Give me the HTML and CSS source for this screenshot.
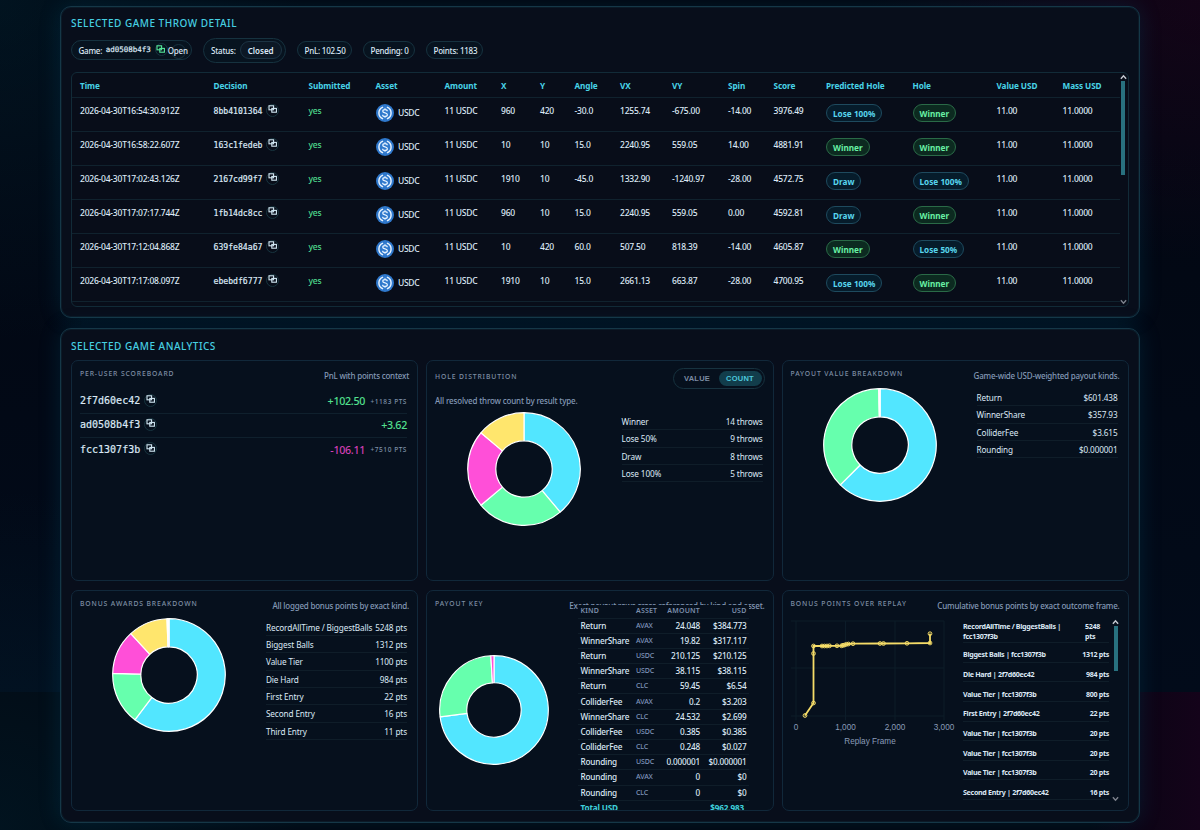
FILE: index.html
```
<!DOCTYPE html>
<html lang="en">
<head>
    <meta charset="UTF-8">
    <meta name="viewport" content="width=device-width, initial-scale=1.0">
    <title>Game Analytics</title>
    <link rel="stylesheet" href="styles.css">
</head>
<body>
    <!-- shared icons -->
    <svg class="defs" width="0" height="0">
        <symbol id="icon-copy" viewBox="0 0 12 12">
            <rect x="2" y="1.8" width="4.6" height="4" fill="none" stroke="currentColor" stroke-width="1.1"/>
            <rect x="4.8" y="4.4" width="4.6" height="3.8" fill="none" stroke="currentColor" stroke-width="1.1"/>
        </symbol>
        <symbol id="icon-usdc" viewBox="0 0 32 32">
            <circle cx="16" cy="16" r="16" fill="#2f78cc"/>
            <path d="M12.6 5.6a11 11 0 0 0 0 20.8M19.4 5.6a11 11 0 0 1 0 20.8" fill="none" stroke="#e6f2ff" stroke-width="2.6"/>
            <path d="M20 13c0-2-1.6-3-4-3s-4 1-4 2.9c0 4.2 8.2 1.9 8.2 6.1 0 2-1.7 3.1-4.2 3.1s-4.2-1.1-4.2-3.2M16 7.6v2.4M16 22v2.4" fill="none" stroke="#e6f2ff" stroke-width="2.2"/>
        </symbol>
        <symbol id="icon-up" viewBox="0 0 8 6"><path d="M1 5l3-3.4L7 5" fill="none" stroke="#c3c7cf" stroke-width="1.7"/></symbol>
        <symbol id="icon-down" viewBox="0 0 8 6"><path d="M1 1l3 3.4L7 1" fill="none" stroke="#7d828c" stroke-width="1.6"/></symbol>
    </svg>

    <main class="page">
        <section class="panel detail">
            <h2>Selected Game Throw Detail</h2>
            <div class="pills">
                <span class="pill game">Game: <code>ad0508b4f3</code><span class="copy green"><svg><use href="#icon-copy"/></svg></span><span class="open">Open</span></span>
                <span class="pill status">Status: <b class="closed">Closed</b></span>
                <span class="pill pnl">PnL: 102.50</span>
                <span class="pill pending">Pending: 0</span>
                <span class="pill points">Points: 1183</span>
            </div>
            <div class="table-box">
                <table class="throws">
                    <colgroup id="throw-cols"></colgroup>
                    <thead>
                        <tr>
                            <th>Time</th><th>Decision</th><th>Submitted</th><th>Asset</th><th>Amount</th><th>X</th><th>Y</th><th>Angle</th>
                            <th>VX</th><th>VY</th><th>Spin</th><th>Score</th><th>Predicted Hole</th><th>Hole</th><th>Value USD</th><th>Mass USD</th>
                        </tr>
                    </thead>
                    <tbody id="throw-rows"></tbody>
                </table>
                <div class="scrollbar">
                    <svg><use href="#icon-up"/></svg>
                    <div class="thumb"></div>
                    <svg class="down"><use href="#icon-down"/></svg>
                </div>
            </div>
        </section>

        <section class="panel analytics">
            <h2>Selected Game Analytics</h2>
            <div class="cards">
                <article class="card">
                    <header><h3>Per-User Scoreboard</h3><p>PnL with points context</p></header>
                    <div class="scores" id="scores"></div>
                </article>

                <article class="card hole">
                    <header>
                        <h3>Hole Distribution</h3>
                        <div class="toggle"><span>VALUE</span><span class="active">COUNT</span></div>
                    </header>
                    <p class="note">All resolved throw count by result type.</p>
                    <div class="split">
                        <svg class="donut" id="hole-donut" viewBox="-57 -57 114 114"></svg>
                        <ul class="legend" id="hole-legend"></ul>
                    </div>
                </article>

                <article class="card">
                    <header><h3>Payout Value Breakdown</h3><p>Game-wide USD-weighted payout kinds.</p></header>
                    <div class="split">
                        <svg class="donut" id="payout-donut" viewBox="-57 -57 114 114"></svg>
                        <ul class="legend" id="payout-legend"></ul>
                    </div>
                </article>

                <article class="card">
                    <header><h3>Bonus Awards Breakdown</h3><p>All logged bonus points by exact kind.</p></header>
                    <div class="split">
                        <svg class="donut" id="bonus-donut" viewBox="-57 -57 114 114"></svg>
                        <ul class="legend" id="bonus-legend"></ul>
                    </div>
                </article>

                <article class="card key">
                    <header><h3>Payout Key</h3><p>Exact payout rows cross-referenced by kind and asset.</p></header>
                    <div class="key-body">
                        <svg class="donut" id="key-donut" viewBox="-57 -57 114 114"></svg>
                        <table class="key-table">
                            <thead><tr><th>KIND</th><th>ASSET</th><th>AMOUNT</th><th>USD</th></tr></thead>
                            <tbody id="key-rows"></tbody>
                        </table>
                    </div>
                </article>

                <article class="card replay">
                    <header><h3>Bonus Points Over Replay</h3><p>Cumulative bonus points by exact outcome frame.</p></header>
                    <div class="replay-body">
                        <svg class="chart" id="replay-chart" viewBox="791 617.5 168 134"></svg>
                        <ul class="events" id="events"></ul>
                        <div class="scrollbar">
                            <svg><use href="#icon-up"/></svg>
                            <div class="thumb"></div>
                            <svg class="down"><use href="#icon-down"/></svg>
                        </div>
                    </div>
                </article>
            </div>
        </section>
    </main>

    <script src="script.js"></script>
</body>
</html>
```

FILE: styles.css
```
* {
    box-sizing: border-box;
}
body {
    margin: 0;
    height: 830px;
    overflow: hidden;
    font-family: "Noto Sans", sans-serif;
    font-size: 8.5px;
    font-weight: 500;
    line-height: 12px;
    letter-spacing: -0.22px;
    color: #dce8f5;
    background:
        linear-gradient(90deg, rgba(14, 4, 22, 0) 1090px, rgba(14, 4, 22, 1) 1150px, #14031a 1200px) 0 692px / 1200px 138px no-repeat,
        radial-gradient(ellipse 330px 260px at 1200px 0, rgba(60, 0, 40, 0.3), transparent),
        radial-gradient(ellipse 300px 340px at 0 0, rgba(0, 45, 62, 0.34), transparent),
        radial-gradient(ellipse 300px 340px at 0 830px, rgba(0, 45, 62, 0.34), transparent),
        linear-gradient(180deg, #020610, #020b1a 692px, #02060f 692px);
}
h2, h3, p, ul {
    margin: 0;
    padding: 0;
    font-weight: normal;
}
svg {
    display: block;
}
.defs {
    position: absolute;
}
.page {
    width: 1080px;
    margin: 0 auto;
    padding-top: 6px;
}
.panel {
    border: 1.5px solid #153747;
    border-radius: 11px;
    padding: 0 10px;
    background: #080e1b;
    box-shadow: 0 0 22px rgba(0, 110, 150, 0.2), inset 0 0 0 1px rgba(21, 55, 71, 0.3);
}
.detail {
    height: 312px;
    margin-bottom: 10px;
}
.analytics {
    height: 494.5px;
}
h2 {
    font-size: 10px;
    font-weight: 500;
    line-height: 14px;
    letter-spacing: 0.5px;
    text-transform: uppercase;
    color: #46cfe2;
    padding-top: 9px;
}
.analytics h2 {
    padding-top: 10px;
}

/* summary pills */
.pills {
    display: flex;
    align-items: center;
    gap: 11px;
    height: 26px;
    margin-top: 7px;
}
.pill {
    display: flex;
    align-items: center;
    height: 18px;
    border: 1px solid #16323f;
    border-radius: 13px;
    padding: 1px 6.5px 0;
    font-size: 8px;
    background: #07131f;
    white-space: nowrap;
}
.pill.game { position: relative; width: 121px; height: 20.5px; }
/* empty ring that sits behind the Open link */
.pill.game::after {
    content: "";
    position: absolute;
    left: 99px;
    top: 3px;
    width: 13px;
    height: 13px;
    border: 1px solid #17323f;
    border-radius: 50%;
}
.pill.status { width: 83px; height: 25px; padding-left: 7px; }
.pill.pnl { width: 55px; }
.pill.pending { width: 52px; }
.pill.points { width: 57px; }
.closed {
    margin: -1px 0 0 4px;
    width: 42px;
    flex: none;
    height: 18px;
    line-height: 17px;
    border: 1px solid #1c3343;
    border-radius: 9px;
    text-align: center;
    font-weight: 600;
    letter-spacing: 0;
    background: #0c1825;
}
code {
    font-family: "DejaVu Sans Mono", monospace;
    font-size: 8.15px;
    letter-spacing: 0;
    -webkit-text-stroke: 0.2px;
}
.pill code {
    font-size: 7.5px;
    margin: -1px 0 0 3.5px;
}
.copy {
    display: inline-block;
    width: 13px;
    height: 13px;
    border: 1px solid #17343f;
    border-radius: 50%;
    margin-left: 4px;
    color: #d3e9f5;
    vertical-align: middle;
}
.copy svg {
    width: 12px;
    height: 12px;
    margin: -0.5px;
}
.pill .copy {
    margin-top: -2px;
}
.copy.green {
    color: #55e89b;
}
.open {
    position: relative;
    z-index: 1;
}

/* throw table */
.table-box {
    display: flex;
    height: 235px;
    margin-top: 8.5px;
    border: 1px solid #122b38;
    border-radius: 6px;
    overflow: hidden;
    background: #080d19;
}
table {
    border-collapse: collapse;
    table-layout: fixed;
}
.throws {
    width: 1048px;
    height: 229px;
}
.throws th {
    height: 25px;
    padding: 1.5px 0 0 8px;
    text-align: left;
    color: #48d4e8;
    font-weight: 700;
    font-size: 8.2px;
    letter-spacing: -0.08px;
    border-bottom: 1px solid #10222e;
}
.throws td {
    height: 34px;
    padding: 7px 0 0 8px;
    vertical-align: top;
    border-bottom: 1px solid #10222e;
    white-space: nowrap;
}
.throws td .copy {
    margin: -3px 0 0 4px;
}
.throws .yes {
    color: #4fdc8f;
}
.asset {
    display: flex;
    align-items: center;
    gap: 4.5px;
    margin-top: -1px;
    letter-spacing: -0.3px;
}
.asset svg {
    width: 18px;
    height: 18px;
}
.badge {
    display: block;
    width: fit-content;
    height: 18px;
    line-height: 17px;
    padding: 0 6px;
    margin-top: -1px;
    border: 1px solid #1e4a5e;
    border-radius: 9px;
    background: #061c2b;
    color: #58d6ee;
    font-weight: 700;
    font-size: 8.2px;
    letter-spacing: 0.02px;
}
.badge.win {
    border-color: #2a6a47;
    background: #0c2a20;
    color: #68f0a4;
}
.scrollbar {
    display: flex;
    flex-direction: column;
    align-items: center;
    width: 6px;
    flex: none;
}
.scrollbar svg {
    width: 7px;
    height: 6px;
    margin-top: 1px;
}
.scrollbar .thumb {
    width: 4px;
    height: 94px;
    margin-top: 1.5px;
    background: #28717f;
}
.scrollbar .down {
    margin: auto 0 1px;
}

/* analytics cards */
.cards {
    display: grid;
    grid-template-columns: 347px 347.5px 347px;
    grid-template-rows: 221px 221px;
    gap: 8.5px 8px;
    margin-top: 7px;
}
.card {
    border: 1px solid #11283a;
    border-radius: 7px;
    padding: 7px 8px 0;
    background: #06101d;
    overflow: hidden;
}
.card header {
    display: flex;
    justify-content: space-between;
    height: 20px;
}
h3 {
    font-size: 6.8px;
    line-height: 12px;
    letter-spacing: 0.88px;
    text-transform: uppercase;
    color: #7d8da3;
    white-space: nowrap;
}
.card h3, .card p {
    font-weight: 500;
}
.card p {
    font-size: 8px;
    line-height: 15px;
    letter-spacing: -0.21px;
    color: #8398b5;
    white-space: nowrap;
}
.scores {
    padding-top: 1.5px;
}
.score {
    display: flex;
    align-items: center;
    height: 24.2px;
    margin-right: 2px;
    border-bottom: 1px solid #0f202d;
}
.score:last-child {
    border: 0;
}
.score code {
    font-size: 10px;
}
.score .copy {
    margin: -2px 0 0 4px;
}
.score .pnl {
    margin-left: auto;
    font-size: 10.7px;
    letter-spacing: -0.3px;
    color: #52e08f;
}
.score .pnl.loss {
    color: #d23fb4;
}
.score small {
    margin: 1px 0 0 5.5px;
    font-size: 6.5px;
    letter-spacing: 0.55px;
    color: #7e90a8;
}
.split {
    display: flex;
    justify-content: space-between;
    padding: 0 2px 0 32px;
}
.donut {
    width: 114px;
    height: 114px;
}
.legend {
    width: 141px;
    list-style: none;
    margin-top: 1px;
}
.legend li {
    display: flex;
    justify-content: space-between;
    height: 17.35px;
    line-height: 17px;
    font-size: 8.2px;
    letter-spacing: -0.12px;
    border-bottom: 1px solid #0f1d29;
    white-space: nowrap;
}
.hole header {
    height: 23px;
}
.hole h3 {
    padding-top: 2.5px;
}
.hole .note {
    padding: 2px 0 4px;
    height: 21px;
    letter-spacing: -0.16px;
}
.toggle {
    display: flex;
    align-items: center;
    width: 92px;
    height: 21px;
    padding: 2px;
    border: 1px solid #17323f;
    border-radius: 11px;
    color: #7d8da3;
    font-family: "Liberation Sans", sans-serif;
    font-size: 7.5px;
    font-weight: 600;
    letter-spacing: 0.25px;
}
.toggle span {
    flex: 1;
    height: 15px;
    line-height: 15px;
    text-align: center;
    border-radius: 8px;
}
.toggle .active {
    background: #123d4b;
    color: #4cc8dc;
}

/* payout key */
.key-body {
    display: flex;
}
.key-body .donut {
    width: 110px;
    height: 110px;
    margin: 37.5px 0 0 3.5px;
}
.key-table {
    position: relative;
    width: 171px;
    margin: -12.5px 0 0 29.5px;
    background: #06101d;
}
.key-table th {
    height: 13px;
    padding: 0;
    font-size: 7px;
    line-height: 10px;
    letter-spacing: 0.2px;
    color: #7d8fac;
    font-weight: 600;
    text-align: right;
    border-bottom: 1px solid #0f1d29;
}
.key-table td {
    height: 15.2px;
    padding: 0;
    text-align: right;
    font-size: 8.2px;
    letter-spacing: -0.18px;
    border-bottom: 1px solid #0f1d29;
}
.key-table th:nth-child(1), .key-table td:nth-child(1) { width: 58px; text-align: left; padding-left: 2.5px; }
.key-table th:nth-child(2), .key-table td:nth-child(2) { width: 24px; text-align: left; }
.key-table th:nth-child(3) { width: 40px; }
.key-table th:nth-child(4), .key-table td:nth-child(4) { padding-right: 2.5px; }
.key-table td:nth-child(2) {
    font-size: 7px;
    letter-spacing: -0.1px;
    color: #7e93ba;
}
.key-table .total td {
    color: #3fd0dc;
    font-weight: 700;
}
.key-table .total td:last-child {
    padding-right: 5px;
}

/* replay chart */
.replay-body {
    display: flex;
}
.chart {
    width: 168px;
    height: 134px;
    flex: none;
}
.chart text {
    font-family: "Liberation Sans", sans-serif;
    font-size: 8.2px;
    font-weight: 400;
    letter-spacing: 0;
    fill: #8a9cb8;
    text-anchor: middle;
}
.events {
    width: 146px;
    margin-left: 4.5px;
    list-style: none;
    font-size: 7.1px;
    font-weight: 700;
    letter-spacing: -0.3px;
}
.events li {
    display: flex;
    justify-content: space-between;
    align-items: center;
    height: 19.65px;
    padding-top: 4px;
    line-height: 10px;
    border-bottom: 1px solid #0f1d29;
}
.events li:first-child {
    height: 25.5px;
    align-items: flex-start;
    padding-top: 3px;
}
.events li:first-child span:first-child {
    width: 110px;
}
.events li:first-child span:last-child {
    width: 24px;
}
.replay .scrollbar {
    height: 185px;
    margin-left: 3.5px;
}
.replay .thumb {
    height: 45px;
}
```

FILE: script.js
```
const COLORS = ['#52e6ff', '#66ffad', '#ff4fd8', '#ffe66d'];
const copyIcon = '<span class="copy"><svg><use href="#icon-copy"/></svg></span>';
const byId = id => document.getElementById(id);

// Throw detail table
const colWidths = [133.5, 95, 67, 69, 56.5, 39, 34.5, 45.5, 52, 56, 45.5, 52.5, 86.5, 84, 66, 65.5];
const throws = [
    ['2026-04-30T16:54:30.912Z', '8bb4101364', 960, 420, '-30.0', '1255.74', '-675.00', '-14.00', '3976.49', 'Lose 100%', 'Winner'],
    ['2026-04-30T16:58:22.607Z', '163c1fedeb', 10, 10, '15.0', '2240.95', '559.05', '14.00', '4881.91', 'Winner', 'Winner'],
    ['2026-04-30T17:02:43.126Z', '2167cd99f7', 1910, 10, '-45.0', '1332.90', '-1240.97', '-28.00', '4572.75', 'Draw', 'Lose 100%'],
    ['2026-04-30T17:07:17.744Z', '1fb14dc8cc', 960, 10, '15.0', '2240.95', '559.05', '0.00', '4592.81', 'Draw', 'Winner'],
    ['2026-04-30T17:12:04.868Z', '639fe84a67', 10, 420, '60.0', '507.50', '818.39', '-14.00', '4605.87', 'Winner', 'Lose 50%'],
    ['2026-04-30T17:17:08.097Z', 'ebebdf6777', 1910, 10, '15.0', '2661.13', '663.87', '-28.00', '4700.95', 'Lose 100%', 'Winner']
];

function badge(name) {
    return `<span class="badge${name === 'Winner' ? ' win' : ''}">${name}</span>`;
}

byId('throw-cols').innerHTML = colWidths.map(w => `<col style="width:${w}px">`).join('');
byId('throw-rows').innerHTML = throws.map(t => `<tr>
    <td>${t[0]}</td><td><code>${t[1]}</code>${copyIcon}</td><td class="yes">yes</td>
    <td><div class="asset"><svg><use href="#icon-usdc"/></svg>USDC</div></td><td>11 USDC</td>
    ${t.slice(2, 9).map(v => `<td>${v}</td>`).join('')}
    <td>${badge(t[9])}</td><td>${badge(t[10])}</td><td>11.00</td><td>11.0000</td></tr>`).join('');

// Scoreboard
byId('scores').innerHTML = [
    ['2f7d60ec42', '+102.50', '+1183 PTS'],
    ['ad0508b4f3', '+3.62', ''],
    ['fcc1307f3b', '-106.11', '+7510 PTS']
].map(([user, pnl, pts]) => `<div class="score"><code>${user}</code>${copyIcon}
    <span class="pnl${pnl[0] === '-' ? ' loss' : ''}">${pnl}</span>${pts ? `<small>${pts}</small>` : ''}</div>`).join('');

// Donut charts
function donut(id, values) {
    const total = values.reduce((a, b) => a + b, 0);
    const R = 56.3, r = 28.2;
    const pt = (rad, a) => `${(rad * Math.sin(a)).toFixed(2)} ${(-rad * Math.cos(a)).toFixed(2)}`;
    let a0 = 0;
    byId(id).innerHTML = values.map((v, i) => {
        const a1 = a0 + v / total * Math.PI * 2;
        const big = a1 - a0 > Math.PI ? 1 : 0;
        const d = `M${pt(R, a0)}A${R} ${R} 0 ${big} 1 ${pt(R, a1)}L${pt(r, a1)}A${r} ${r} 0 ${big} 0 ${pt(r, a0)}Z`;
        a0 = a1;
        return `<path d="${d}" fill="${COLORS[i % 4]}" stroke="#fff" stroke-width="1.2" stroke-linejoin="bevel"/>`;
    }).join('');
}

function legend(id, items) {
    byId(id).innerHTML = items.map(([k, v]) => `<li><span>${k}</span><span>${v}</span></li>`).join('');
}

donut('hole-donut', [14, 9, 8, 5]);
legend('hole-legend', [['Winner', '14 throws'], ['Lose 50%', '9 throws'], ['Draw', '8 throws'], ['Lose 100%', '5 throws']]);

donut('payout-donut', [601.438, 357.93, 3.615, 0.000001]);
legend('payout-legend', [['Return', '$601.438'], ['WinnerShare', '$357.93'], ['ColliderFee', '$3.615'], ['Rounding', '$0.000001']]);

donut('bonus-donut', [5248, 1312, 1100, 984, 22, 16, 11]);
legend('bonus-legend', [
    ['RecordAllTime / BiggestBalls', '5248 pts'], ['Biggest Balls', '1312 pts'], ['Value Tier', '1100 pts'],
    ['Die Hard', '984 pts'], ['First Entry', '22 pts'], ['Second Entry', '16 pts'], ['Third Entry', '11 pts']
]);

// Payout key
donut('key-donut', [705.1, 251.8, 9]);
byId('key-rows').innerHTML = [
    ['Return', 'AVAX', '24.048', '$384.773'],
    ['WinnerShare', 'AVAX', '19.82', '$317.117'],
    ['Return', 'USDC', '210.125', '$210.125'],
    ['WinnerShare', 'USDC', '38.115', '$38.115'],
    ['Return', 'CLC', '59.45', '$6.54'],
    ['ColliderFee', 'AVAX', '0.2', '$3.203'],
    ['WinnerShare', 'CLC', '24.532', '$2.699'],
    ['ColliderFee', 'USDC', '0.385', '$0.385'],
    ['ColliderFee', 'CLC', '0.248', '$0.027'],
    ['Rounding', 'USDC', '0.000001', '$0.000001'],
    ['Rounding', 'AVAX', '0', '$0'],
    ['Rounding', 'CLC', '0', '$0']
].map(row => `<tr>${row.map(c => `<td>${c}</td>`).join('')}</tr>`).join('') +
    '<tr class="total"><td>Total USD</td><td></td><td></td><td>$962.983</td></tr>';

// Bonus points over replay
const points = [[805, 715], [813.5, 702.5], [813.5, 653], [813.5, 645.5], [822, 645.5], [824.5, 645.5], [827, 645.5], [829.5, 645.3],
    [837, 645.3], [841.5, 645.3], [843, 644.8], [844.5, 644.5], [846.5, 643.8], [848.5, 643.5], [853, 643.2], [880, 643], [883.5, 643],
    [907, 642.8], [930, 642.5], [930, 633.2]];
const line = (x1, y1, x2, y2) => `<line x1="${x1}" y1="${y1}" x2="${x2}" y2="${y2}" stroke="#0c1c29"/>`;
const ticks = [[796, '0'], [845.5, '1,000'], [895, '2,000'], [944, '3,000']];
byId('replay-chart').innerHTML =
    [620.5, 667.5, 715.5].map(y => line(791, y, 944, y)).join('') +
    ticks.map(([x, label]) => line(x, 620.5, x, 720) + `<text x="${x}" y="729.3">${label}</text>`).join('') +
    '<text x="870" y="743.3">Replay Frame</text>' +
    `<polyline points="${points.join(' ')}" fill="none" stroke="#f5dc68" stroke-width="1.8"/>` +
    points.map(([x, y]) => `<circle cx="${x}" cy="${y}" r="1.9" fill="#ffe66d" fill-opacity="0.2" stroke="#f5dc68" stroke-width="0.9"/>`).join('');

byId('events').innerHTML = [
    ['RecordAllTime / BiggestBalls | fcc1307f3b', '5248 pts'],
    ['Biggest Balls | fcc1307f3b', '1312 pts'],
    ['Die Hard | 2f7d60ec42', '984 pts'],
    ['Value Tier | fcc1307f3b', '800 pts'],
    ['First Entry | 2f7d60ec42', '22 pts'],
    ['Value Tier | fcc1307f3b', '20 pts'],
    ['Value Tier | fcc1307f3b', '20 pts'],
    ['Value Tier | fcc1307f3b', '20 pts'],
    ['Second Entry | 2f7d60ec42', '16 pts']
].map(([k, v]) => `<li><span>${k}</span><span>${v}</span></li>`).join('');
```
